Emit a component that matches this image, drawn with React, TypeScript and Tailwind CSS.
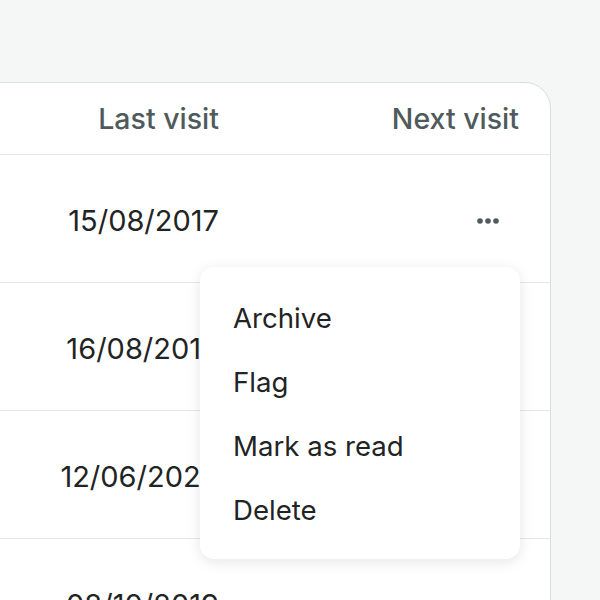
const rows = ["15/08/2017", "16/08/2018", "12/06/2020", "08/10/2019"];
const actions = ["Archive", "Flag", "Mark as read", "Delete"];

function Dots() {
  return (
    <svg width="22" height="6" viewBox="0 0 22 6" className="text-[#4f5a5c]" fill="currentColor">
      <circle cx="3" cy="3" r="2.8" />
      <circle cx="11" cy="3" r="2.8" />
      <circle cx="19" cy="3" r="2.8" />
    </svg>
  );
}

export default function App() {
  return (
    <div className="h-[600px] w-[600px] overflow-hidden bg-[#f5f6f6] pt-[82px] font-['Inter',sans-serif]">
      <div className="relative -ml-[200px] w-[751px] rounded-tr-[26px] border border-[#dadddd] bg-white">
        <div className="flex h-[72px] items-center border-b border-[#e6e8e8] pt-[2px] text-[28.5px] font-medium text-[#4f5a5c]">
          <div className="w-[418px] text-right">Last visit</div>
          <div className="flex-1 pr-[31px] text-right">Next visit</div>
        </div>
        {rows.map((date, i) => (
          <div
            key={date}
            className="flex h-[128px] items-center border-b border-[#e6e8e8] pt-[4px] text-[29px] text-[#1f2424]"
          >
            <div className="w-[418px] text-right">{date}</div>
            <div className="flex flex-1 justify-end pr-[51px]">{i === 0 ? <Dots /> : null}</div>
          </div>
        ))}
        <div className="absolute left-[399px] top-[184px] w-[320px] rounded-[14px] bg-white pb-[16px] pt-[20px] shadow-[0_3px_14px_rgba(0,0,0,0.1)]">
          {actions.map((a) => (
            <div key={a} className="flex h-[64px] items-center pl-[33px] text-[27.6px] text-[#1f2424]">
              {a}
            </div>
          ))}
        </div>
      </div>
    </div>
  );
}
